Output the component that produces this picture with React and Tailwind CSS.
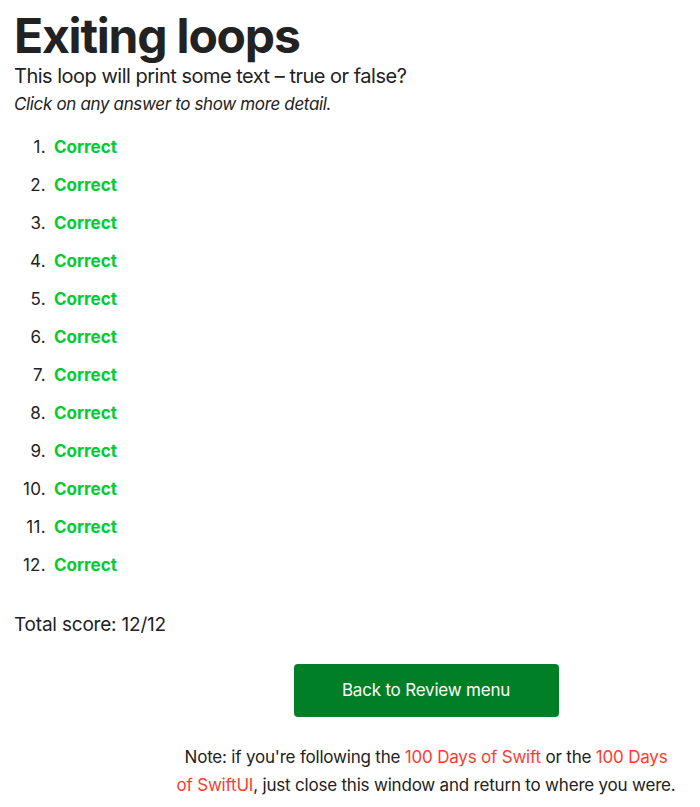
const ANSWERS = Array.from({ length: 12 }, (_, i) => ({ id: i + 1, result: 'Correct' }))

export default function App() {
  return (
    <div className="min-h-screen bg-white px-[14px] pt-[7px] text-[#222] font-['Inter','Liberation_Sans',sans-serif]">
      {/* Header */}
      <h1 className="text-[48px] font-bold leading-[58px] tracking-[-1.2px]">Exiting loops</h1>
      <p className="text-[20px] leading-[26px] -mt-[2px] tracking-[-0.5px]">This loop will print some text – true or false?</p>
      <p className="text-[17px] italic leading-[24px] mt-[3px] tracking-[-0.35px]">Click on any answer to show more detail.</p>

      {/* Answers */}
      <ol className="mt-[20px] flex flex-col gap-[15px]">
        {ANSWERS.map((a) => (
          <li key={a.id} className="flex items-baseline text-[17px] leading-[23px]">
            <span className="w-[32px] text-right tracking-[0.3px]">{a.id}.</span>
            <span className="ml-[8px] font-bold text-[#00cc33] cursor-pointer">{a.result}</span>
          </li>
        ))}
      </ol>

      <p className="mt-[35px] text-[19px] leading-[26px] tracking-[-0.2px]">Total score: 12/12</p>

      {/* Footer */}
      <div className="ml-[160px] mr-[8px] mt-[26px] flex flex-col items-center">
        <button className="w-[265px] h-[53px] rounded-[4px] bg-[#007f27] text-white text-[17px] tracking-[-0.2px]">
          Back to Review menu
        </button>
        <p className="mt-[26px] text-center text-[17px] leading-[28px] tracking-[-0.2px]">
          Note: if you're following the <a className="text-[#ff3b30]">100 Days of Swift</a> or the{' '}
          <a className="text-[#ff3b30]">100 Days of{'\u00a0'}SwiftUI</a>, just close this window and return to where you were.
        </p>
      </div>
    </div>
  )
}
